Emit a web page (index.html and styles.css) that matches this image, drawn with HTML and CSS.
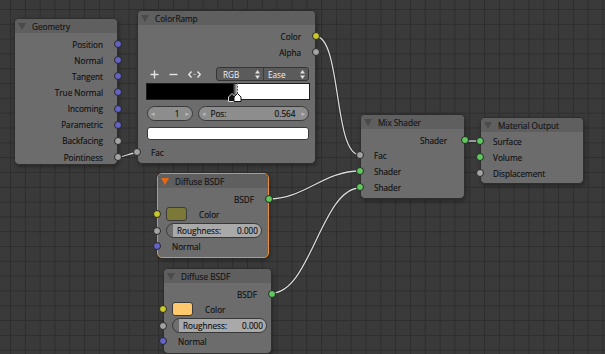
FILE: index.html
```html
<!DOCTYPE html>
<html>
<head>
<meta charset="utf-8">
<link rel="stylesheet" href="styles.css">
</head>
<body>
<div class="canvas">
  <svg class="wires" width="605" height="354" viewBox="0 0 605 354">
    <g class="wire-shadow">
      <path d="M117,157 C127,157 127,153 137,153"/>
      <path d="M315,36 C342,36 333,155 360,155"/>
      <path d="M268,199 C305,199 323,171 360,171"/>
      <path d="M272,293 C310,293 322,188 360,188"/>
      <path d="M464,141 L480,141"/>
    </g>
    <g class="wire">
      <path d="M117,157 C127,157 127,153 137,153"/>
      <path d="M315,36 C342,36 333,155 360,155"/>
      <path d="M268,199 C305,199 323,171 360,171"/>
      <path d="M272,293 C310,293 322,188 360,188"/>
      <path d="M464,141 L480,141"/>
    </g>
  </svg>

  <!-- Geometry -->
  <div class="node n-geo">
    <div class="hdr"><svg class="tri" width="8" height="7" viewBox="0 0 8 7"><polygon points="0,0 8,0 4,7"/></svg><span>Geometry</span></div>
    <div class="body geo-body">
      <div class="row out geo-row">Position<i class="sock r vec"></i></div>
      <div class="row out geo-row">Normal<i class="sock r vec"></i></div>
      <div class="row out geo-row">Tangent<i class="sock r vec"></i></div>
      <div class="row out geo-row">True Normal<i class="sock r vec"></i></div>
      <div class="row out geo-row">Incoming<i class="sock r vec"></i></div>
      <div class="row out geo-row">Parametric<i class="sock r vec"></i></div>
      <div class="row out geo-row">Backfacing<i class="sock r val"></i></div>
      <div class="row out geo-row">Pointiness<i class="sock r val"></i></div>
    </div>
  </div>

  <!-- ColorRamp -->
  <div class="node n-ramp">
    <div class="hdr"><svg class="tri" width="8" height="7" viewBox="0 0 8 7"><polygon points="0,0 8,0 4,7"/></svg><span>ColorRamp</span></div>
    <div class="body ramp-body">
      <div class="row out">Color<i class="sock r col"></i></div>
      <div class="row out">Alpha<i class="sock r val"></i></div>
      <div class="ramp-controls">
        <div class="tools">
          <div class="icons">
            <svg width="9" height="9" viewBox="0 0 9 9"><path d="M4.5,0.5 V8.5 M0.5,4.5 H8.5"/></svg>
            <svg width="9" height="9" viewBox="0 0 9 9"><path d="M0.5,4.5 H8.5"/></svg>
            <svg width="13" height="9" viewBox="0 0 13 9"><path d="M3.5,1.5 L0.8,4.5 L3.5,7.5 M9.5,1.5 L12.2,4.5 L9.5,7.5"/><path class="dot" d="M5.5,4.5 H7.5"/></svg>
          </div>
          <div class="dropdown">
            <div class="dd-part">RGB<svg class="updown" width="5" height="9" viewBox="0 0 5 9"><polygon points="2.5,0 5,3.5 0,3.5"/><polygon points="0,5.5 5,5.5 2.5,9"/></svg></div>
            <div class="dd-part">Ease<svg class="updown" width="5" height="9" viewBox="0 0 5 9"><polygon points="2.5,0 5,3.5 0,3.5"/><polygon points="0,5.5 5,5.5 2.5,9"/></svg></div>
          </div>
        </div>
        <div class="ramp-bar">
          <svg class="markers" width="20" height="19" viewBox="0 0 20 19">
            <path class="dash" d="M11.5,0 V11"/>
            <polygon class="mk-black" points="2.5,18.5 2.5,14 6,10.5 9.5,14 9.5,18.5"/>
            <polygon class="mk-white" points="8,18.5 8,14 11.5,10.5 15,14 15,18.5"/>
          </svg>
        </div>
        <div class="nums">
          <div class="numfield small"><span class="arr">&#9666;</span><span class="nv">1</span><span class="arr">&#9656;</span></div>
          <div class="numfield wide"><span class="arr">&#9666;</span><span class="nl">Pos:</span><span class="nv">0.564</span><span class="arr">&#9656;</span></div>
        </div>
        <div class="swatch-white"></div>
      </div>
      <div class="row in fac-row"><i class="sock l val"></i>Fac</div>
    </div>
  </div>

  <!-- Diffuse BSDF 1 (active) -->
  <div class="node n-diff1 active">
    <div class="hdr"><svg class="tri" width="8" height="7" viewBox="0 0 8 7"><polygon points="0,0 8,0 4,7"/></svg><span>Diffuse BSDF</span></div>
    <div class="body diff-body">
      <div class="row out">BSDF<i class="sock r shd"></i></div>
      <div class="row color-row"><i class="sock l col"></i><span class="swatch olive"></span><span class="clabel">Color</span></div>
      <div class="slider-row"><i class="sock l val"></i><div class="slider"><span>Roughness:</span><span>0.000</span></div></div>
      <div class="row in"><i class="sock l vec"></i>Normal</div>
    </div>
  </div>

  <!-- Diffuse BSDF 2 -->
  <div class="node n-diff2">
    <div class="hdr"><svg class="tri" width="8" height="7" viewBox="0 0 8 7"><polygon points="0,0 8,0 4,7"/></svg><span>Diffuse BSDF</span></div>
    <div class="body diff-body">
      <div class="row out">BSDF<i class="sock r shd"></i></div>
      <div class="row color-row"><i class="sock l col"></i><span class="swatch peach"></span><span class="clabel">Color</span></div>
      <div class="slider-row"><i class="sock l val"></i><div class="slider"><span>Roughness:</span><span>0.000</span></div></div>
      <div class="row in"><i class="sock l vec"></i>Normal</div>
    </div>
  </div>

  <!-- Mix Shader -->
  <div class="node n-mix">
    <div class="hdr"><svg class="tri" width="8" height="7" viewBox="0 0 8 7"><polygon points="0,0 8,0 4,7"/></svg><span>Mix Shader</span></div>
    <div class="body mix-body">
      <div class="row out first">Shader<i class="sock r shd"></i></div>
      <div class="row in"><i class="sock l val"></i>Fac</div>
      <div class="row in"><i class="sock l shd"></i>Shader</div>
      <div class="row in"><i class="sock l shd"></i>Shader</div>
    </div>
  </div>

  <!-- Material Output -->
  <div class="node n-out">
    <div class="hdr"><svg class="tri" width="8" height="7" viewBox="0 0 8 7"><polygon points="0,0 8,0 4,7"/></svg><span>Material Output</span></div>
    <div class="body out-body">
      <div class="row in"><i class="sock l shd"></i>Surface</div>
      <div class="row in"><i class="sock l shd"></i>Volume</div>
      <div class="row in"><i class="sock l val"></i>Displacement</div>
    </div>
  </div>
</div>
</body>
</html>
```

FILE: styles.css
```css
* { box-sizing: border-box; }
html, body { margin: 0; padding: 0; background: #393939; }

.canvas {
  position: relative;
  width: 605px;
  height: 354px;
  overflow: hidden;
  background-color: #3a3a3a;
  background-image:
    linear-gradient(to right, #2e2e2e 1px, transparent 1px),
    linear-gradient(to bottom, #2e2e2e 1px, transparent 1px);
  background-size: 14.82px 14.82px;
  background-position: 10px 9px;
  font-family: "Open Sans", "DejaVu Sans", sans-serif;
  font-size: 8.2px;
  color: #101010;
  -webkit-text-stroke: 0.15px #101010;
}

.wires { position: absolute; left: 0; top: 0; }
.wire-shadow path { fill: none; stroke: #1c1c1c; stroke-width: 2.6; opacity: .6; }
.wire path { fill: none; stroke: #dadada; stroke-width: 1.3; }

.node {
  position: absolute;
  background: #6c6c6c;
  border: 1px solid #2e2e2e;
  border-radius: 5px;
  box-shadow: 1px 2px 4px rgba(0,0,0,.35);
}
.node.active { border-color: #e98e35; }

.hdr {
  height: 14px;
  background: #5f5f5f;
  border-radius: 4px 4px 0 0;
  display: flex;
  align-items: center;
  padding-left: 3px;
  gap: 6px;
  color: #161616;
}
.tri polygon { fill: #4a4a4a; }
.active .tri polygon { fill: #e46a12; }

.row {
  position: relative;
  height: 16px;
  display: flex;
  align-items: center;
  white-space: nowrap;
}
.row.out { justify-content: flex-end; padding-right: 14px; }
.row.in { padding-left: 13px; }

.sock {
  position: absolute;
  top: 50%;
  width: 8px;
  height: 8px;
  margin-top: -4px;
  border-radius: 50%;
  border: 1px solid #262626;
}
.sock.r { right: -5px; }
.sock.l { left: -5px; }
.sock.vec { background: #6363c8; }
.sock.val { background: #a3a3a3; }
.sock.col { background: #c8c82a; }
.sock.shd { background: #5ec85e; }

/* Geometry */
.n-geo { left: 14px; top: 18px; width: 104px; height: 147px; }
.geo-body { padding-top: 3px; }
.geo-row { height: 16.15px; padding-right: 15px; }

/* ColorRamp */
.n-ramp { left: 137px; top: 10px; width: 179px; height: 154px; }
.ramp-body { padding-top: 3px; }
.ramp-controls { padding: 0 5px 0 8px; }
.tools {
  margin-top: 7px;
  height: 14px;
  display: flex;
  align-items: center;
}
.icons { display: flex; align-items: center; gap: 10px; padding-left: 4px; }
.icons path { fill: none; stroke: #e4e4e4; stroke-width: 1.4; }
.icons path.dot { stroke: #bdbdbd; stroke-width: 1; }
.dropdown {
  margin-left: auto;
  margin-right: 1px;
  width: 93px;
  height: 14px;
  display: flex;
  border: 1px solid #353535;
  border-radius: 3px;
  background: #5b5b5b;
  overflow: hidden;
}
.dd-part {
  flex: 1;
  display: flex;
  align-items: center;
  justify-content: space-between;
  padding: 0 3px 0 6px;
  color: #f0f0f0;
  -webkit-text-stroke: 0;
}
.dd-part + .dd-part { border-left: 1px solid #3c3c3c; padding-left: 4px; }
.updown polygon { fill: #e0e0e0; }

.ramp-bar {
  position: relative;
  margin-top: 2px;
  height: 17px;
  border: 1px solid #1e1e1e;
  background: linear-gradient(to right, #000 0, #000 52.8%, #fff 56.4%, #fff 100%);
}
.markers { position: absolute; left: 79px; top: -1px; }
.markers .dash { stroke: #444; stroke-width: 1; stroke-dasharray: 1.5 1.5; }
.mk-black { fill: #111; stroke: #ddd; stroke-width: 1; }
.mk-white { fill: #fff; stroke: #111; stroke-width: 1; }

.nums {
  margin-top: 6px;
  display: flex;
  gap: 5px;
  height: 15px;
  padding-left: 1px;
  padding-right: 1px;
}
.numfield {
  display: flex;
  align-items: center;
  height: 15px;
  border: 1px solid #3a3a3a;
  border-radius: 8px;
  background: #8d8d8d;
  padding: 0 3px;
  gap: 3px;
}
.numfield.small { width: 46px; }
.numfield.wide { flex: 1; }
.arr { color: #b8b8b8; font-size: 7px; -webkit-text-stroke: 0; }
.numfield .nv { margin-left: auto; }
.numfield.small .nv { margin-right: 3px; }
.numfield.wide .nv { margin-right: 3px; }
.nl { margin-left: 2px; }

.swatch-white {
  margin-top: 6px;
  height: 13px;
  margin-left: 1px;
  margin-right: 1px;
  background: #fff;
  border: 1px solid #3a3a3a;
  border-radius: 3px;
}
.fac-row { margin-top: 4px; padding-left: 14px; }

/* Diffuse */
.n-diff1 { left: 157px; top: 173px; width: 112px; height: 85px; }
.n-diff2 { left: 163px; top: 268px; width: 109px; height: 86px; }
.diff-body { padding-top: 3px; }
.color-row { height: 14px; padding-left: 8px; }
.swatch {
  width: 21px;
  height: 14px;
  border: 1px solid #3a3a3a;
  border-radius: 3px;
}
.swatch.olive { background: #7c7838; }
.swatch.peach { background: #fdc96c; }
.clabel { margin-left: 12px; }
.slider-row {
  position: relative;
  margin-top: 2px;
  height: 15px;
  padding-left: 8px;
  padding-right: 6px;
}
.n-diff2 .slider-row { padding-right: 4px; }
.slider {
  height: 15px;
  border: 1px solid #383838;
  border-radius: 8px;
  background: linear-gradient(to right, #6e6e6e 0, #6e6e6e 6px, #a9a9a9 6px);
  display: flex;
  align-items: center;
  justify-content: space-between;
  padding: 0 3px 0 10px;
}
.diff-body .row.in { padding-left: 14px; }

/* Mix Shader */
.n-mix { left: 360px; top: 114px; width: 105px; height: 85px; }
.mix-body { padding-top: 4px; }
.mix-body .first { height: 14px; padding-right: 17px; }

/* Material Output */
.n-out { left: 480px; top: 117px; width: 104px; height: 67px; }
.out-body { padding-top: 1px; }
.out-body .row.in { padding-left: 12px; }
```
